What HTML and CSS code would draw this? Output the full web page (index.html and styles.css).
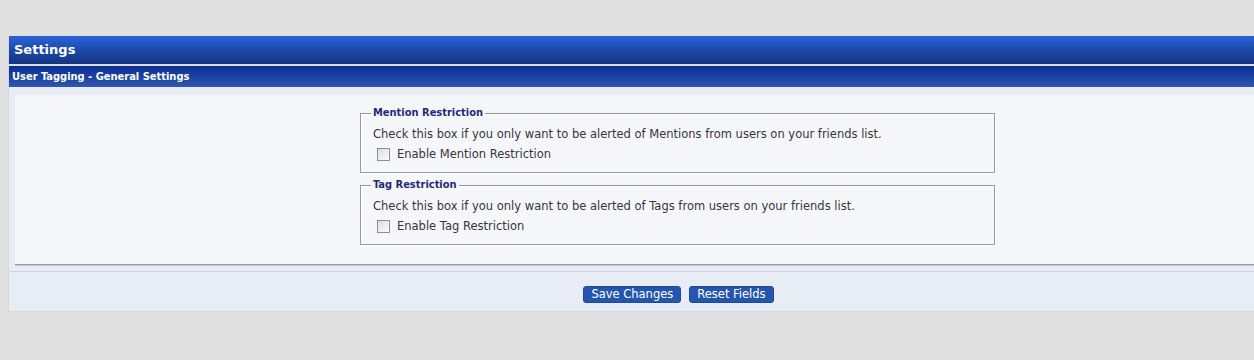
FILE: index.html
```html
<!DOCTYPE html>
<html>
  <head>
    <meta charset="UTF-8" />
    <title>Settings</title>
    <link rel="stylesheet" href="styles.css">
  </head>
  <body>
    <div class="tborder">
      <div class="tcat">Settings</div>
      <div class="thead">User Tagging - General Settings</div>
      <div class="panel-wrap">
        <div class="panel">
          <fieldset class="fieldset">
            <legend>Mention Restriction</legend>
            <div class="desc">Check this box if you only want to be alerted of Mentions from users on your friends list.</div>
            <label class="check"><span class="box"></span>Enable Mention Restriction</label>
          </fieldset>
          <fieldset class="fieldset">
            <legend>Tag Restriction</legend>
            <div class="desc">Check this box if you only want to be alerted of Tags from users on your friends list.</div>
            <label class="check"><span class="box"></span>Enable Tag Restriction</label>
          </fieldset>
        </div>
      </div>
      <div class="tfoot">
        <button class="button">Save Changes</button>
        <button class="button">Reset Fields</button>
      </div>
    </div>
  </body>
</html>
```

FILE: styles.css
```css
body{
	background: #e0e0e0;
	margin: 0;
	padding: 36px 0 0 8px;
	overflow: hidden;
	font-family: Verdana, "DejaVu Sans", sans-serif;
	font-size: 11.5px;
	color: #35353f;
}

.tborder{
	width: 1331px;
	background: #e8ecf5;
	border-left: 1px solid #d4d8e0;
	border-bottom: 1px solid #d4d8e0;
}

.tcat{
	height: 28px;
	line-height: 28px;
	padding-left: 5px;
	background: linear-gradient(to bottom, #2a63d9 0%, #1d4cae 45%, #15327f 100%);
	color: white;
	font-weight: bold;
	font-size: 13px;
	border-bottom: 2px solid #dcdde0;
}

.thead{
	height: 21px;
	line-height: 21px;
	padding-left: 3px;
	background: linear-gradient(to bottom, #0c2f93 0%, #1a41a0 50%, #3158ad 100%);
	color: white;
	font-family: "DejaVu Sans Condensed", "DejaVu Sans", sans-serif;
	font-weight: bold;
	font-size: 11px;
}

.panel-wrap{
	padding: 8px 0 6px 6px;
	border-bottom: 1px solid #cfd3dc;
}

.panel{
	background: #f5f7fb;
	border-bottom: 1px solid #9c9c9c;
	box-shadow: 0 1px #c4c6cc;
	padding: 10px 0 19px;
	display: flex;
	flex-direction: column;
	align-items: center;
	gap: 4px;
}

.fieldset{
	width: 613px;
	margin: 0;
	padding: 0 8px 10px 12px;
	border: 1px solid #9a9a9a;
	box-shadow: inset 1px 1px #fff, 1px 1px #fff;
	line-height: 16px;
}

.fieldset legend{
	padding: 0 2px;
	margin-left: -2px;
	color: #1e2a7a;
	font-family: "DejaVu Sans Condensed", "DejaVu Sans", sans-serif;
	font-weight: bold;
	font-size: 11px;
}

.desc{
	margin-top: 5px;
}

.check{
	display: flex;
	align-items: center;
	gap: 7px;
	margin-top: 4px;
	padding-left: 4px;
}

.box{
	width: 11px;
	height: 11px;
	border: 1px solid #8e8f8f;
	background: linear-gradient(135deg, #dcdcdc, #fdfdfd);
}

.tfoot{
	padding: 14px 0 8px 8px;
	display: flex;
	justify-content: center;
	gap: 8px;
	background: #e8ecf5;
}

.button{
	font-family: Verdana, "DejaVu Sans", sans-serif;
	font-size: 11.5px;
	height: 17px;
	line-height: 15px;
	padding: 0 7px;
	background: #2556ae;
	color: white;
	border: 1px solid #1e4a99;
	border-radius: 3px;
	cursor: pointer;
}
```
